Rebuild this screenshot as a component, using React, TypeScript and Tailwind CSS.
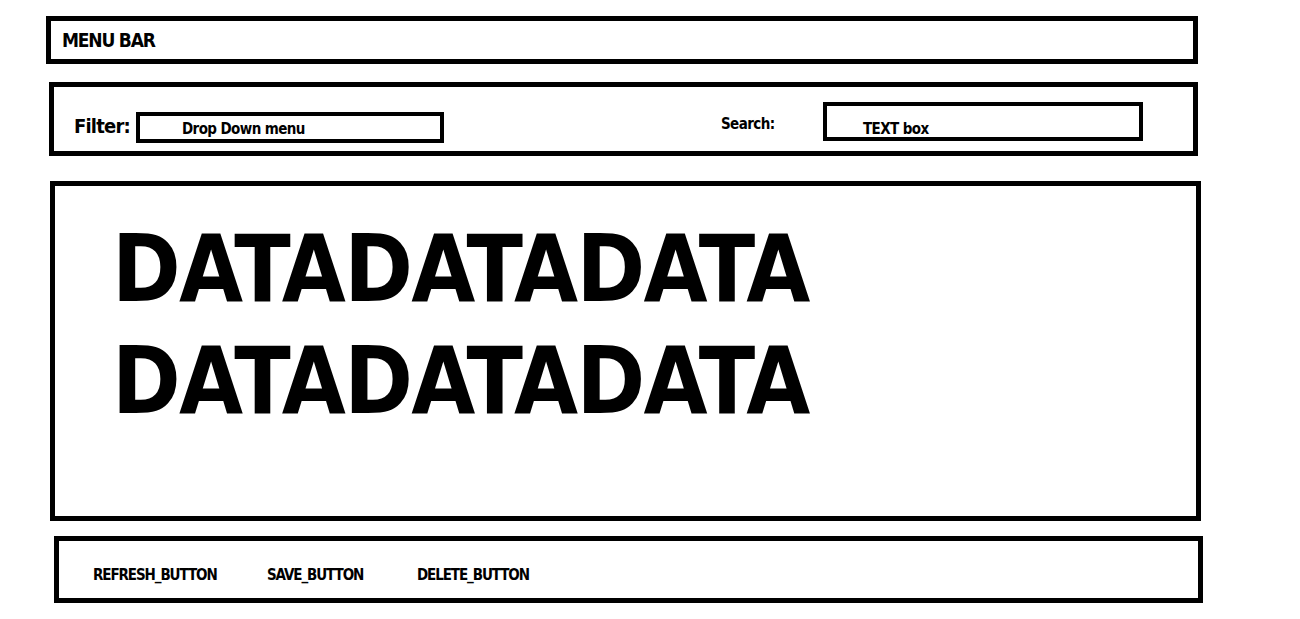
const font = { fontFamily: '"DejaVu Sans Condensed", "DejaVu Sans", sans-serif' };

export default function App() {
  return (
    <div
      className="w-[1300px] h-[619px] bg-white text-black font-bold font-stretch-condensed flex flex-col pt-[16px] overflow-hidden"
      style={font}
    >
      {/* Menu bar */}
      <div className="ml-[46px] w-[1152px] h-[48px] border-[5px] border-black flex items-center pl-[11px]">
        <span className="text-[19px] leading-none tracking-[-1.2px]">MENU BAR</span>
      </div>

      {/* Filter / search */}
      <div className="mt-[18px] ml-[49px] w-[1149px] h-[74px] border-[5px] border-black flex items-start">
        <span className="ml-[20px] w-[62px] mt-[27px] text-[20px] leading-[24px] tracking-[-0.8px]">Filter:</span>
        <div className="mt-[25px] w-[308px] h-[31px] border-4 border-black pl-[42px] pt-[1px]">
          <span className="text-[15px] leading-[16px] tracking-[-0.6px]">Drop Down menu</span>
        </div>
        <span className="ml-[277px] w-[102px] mt-[28px] text-[15px] leading-[18px] tracking-[-0.6px]">Search:</span>
        <div className="mt-[15px] w-[320px] h-[39px] border-4 border-black pl-[36px] pt-[11px]">
          <span className="text-[15px] leading-[16px] tracking-[-0.6px]">TEXT box</span>
        </div>
      </div>

      {/* Data */}
      <div className="mt-[25px] ml-[50px] w-[1151px] h-[340px] border-[5px] border-black pl-[57px] pt-[28px]">
        <div className="text-[92px] leading-[112px] tracking-[-1.7px]">DATADATADATA</div>
        <div className="text-[92px] leading-[112px] tracking-[-1.7px]">DATADATADATA</div>
      </div>

      {/* Buttons */}
      <div className="mt-[15px] ml-[54px] w-[1149px] h-[67px] border-[5px] border-black flex items-start pt-[25px] pl-[34px]">
        <button type="button" className="w-[174px] text-left text-[15px] leading-[18px] tracking-[-1.1px]">REFRESH_BUTTON</button>
        <button type="button" className="w-[150px] text-left text-[15px] leading-[18px] tracking-[-1.1px]">SAVE_BUTTON</button>
        <button type="button" className="text-left text-[15px] leading-[18px] tracking-[-1.1px]">DELETE_BUTTON</button>
      </div>
    </div>
  );
}
